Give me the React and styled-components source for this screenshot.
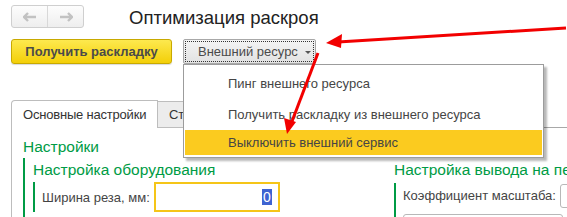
// App.jsx: "Оптимизация раскроя" form with the opened external resource menu

import React from 'react';
import styled, { createGlobalStyle } from 'styled-components';

const Green = '#009b45';
const Text = '#444';

const GlobalStyle = createGlobalStyle`
  html, body { margin: 0; padding: 0; background: #fff; }
  body {
    font-family: "Liberation Sans", Arial, sans-serif;
    font-size: 13px;
    color: ${Text};
    width: 567px;
    height: 217px;
    overflow: hidden;
  }
`;

const Page = styled.div`
  position: relative;
  padding: 5px 0 0 11px;
  height: 212px;
  overflow: hidden;
  white-space: nowrap;
`;

const TopRow = styled.div`
  display: flex;
  align-items: center;
  height: 23px;
`;

const NavGroup = styled.div`
  display: flex;
  width: 73px;
  height: 23px;
  box-sizing: border-box;
  border: 1px solid #cfcfcf;
  border-radius: 3px;
  background: linear-gradient(#fdfdfd, #eeeeee);
`;

const NavButton = styled.div`
  flex: 1;
  display: flex;
  align-items: center;
  justify-content: center;
  border-left: ${(p) => (p.$divider ? '1px solid #d8d8d8' : 'none')};
`;

const Title = styled.div`
  margin-left: 45px;
  margin-top: 2px;
  font-size: 18.5px;
  color: #222;
`;

const ButtonRow = styled.div`
  display: flex;
  gap: 11px;
  margin-top: 11px;
  align-items: flex-start;
`;

const YellowButton = styled.div`
  width: 161px;
  height: 25px;
  box-sizing: border-box;
  border: 1px solid #c8a900;
  border-radius: 3px;
  background: linear-gradient(#fde94f, #f3cf08);
  display: flex;
  align-items: center;
  justify-content: center;
  font-weight: bold;
  color: #4a4a4a;
  box-shadow: 0 1px 1px rgba(0, 0, 0, 0.15);
`;

const MenuHolder = styled.div`
  position: relative;
`;

const SubmenuButton = styled.div`
  width: 133px;
  height: 25px;
  box-sizing: border-box;
  border: 1px solid #a8a8a8;
  border-radius: 2px;
  background: linear-gradient(#f4f4f4, #e2e2e2);
  padding: 1px;
`;

const FocusFrame = styled.div`
  height: 100%;
  box-sizing: border-box;
  border: 1px dotted #333;
  display: flex;
  align-items: center;
  padding-left: 12px;
  gap: 7px;
  color: #4a4a4a;
`;

const Caret = styled.span`
  width: 0;
  height: 0;
  border-left: 3px solid transparent;
  border-right: 3px solid transparent;
  border-top: 3px solid #555;
  margin-top: 2px;
`;

const Menu = styled.div`
  position: absolute;
  top: 25px;
  left: 0;
  z-index: 5;
  width: 361px;
  box-sizing: border-box;
  background: #fff;
  border: 1px solid #9c9c9c;
  box-shadow: 3px 3px 2px rgba(0, 0, 0, 0.28);
  padding: 3px 1px 2px;
`;

const MenuItem = styled.div`
  height: ${(p) => (p.$active ? '25px' : '31px')};
  display: flex;
  align-items: center;
  padding-left: 43px;
  background: ${(p) => (p.$active ? '#fbcb1f' : 'transparent')};
  color: #454545;
`;

const Tabs = styled.div`
  display: flex;
  margin-top: 36px;
  height: 28px;
`;

const Tab = styled.div`
  box-sizing: border-box;
  width: ${(p) => p.$width}px;
  padding-left: 11px;
  display: flex;
  align-items: center;
  border: 1px solid #bdbdbd;
  border-bottom: ${(p) => (p.$active ? 'none' : '1px solid #bdbdbd')};
  border-left: ${(p) => (p.$active ? '1px solid #bdbdbd' : 'none')};
  border-radius: ${(p) => (p.$active ? '4px 0 0 0' : '0')};
  background: ${(p) => (p.$active ? '#fff' : '#ececec')};
  margin-top: ${(p) => (p.$active ? '0' : '1px')};
  color: #333;
  letter-spacing: -0.2px;
`;

const TabFill = styled.div`
  flex: 1;
  border-bottom: 1px solid #a8a8a8;
`;

const Panel = styled.div`
  border-left: 1px solid #bdbdbd;
  padding: 9px 0 0 11px;
  height: 100px;
`;

const Heading = styled.div`
  color: ${Green};
  font-size: 15.5px;
  line-height: 20px;
`;

const Columns = styled.div`
  display: flex;
  margin-top: 1px;
`;

const Group = styled.div`
  border-left: ${(p) => (p.$bar ? `2px solid ${Green}` : 'none')};
  padding-left: ${(p) => (p.$bar ? 8 : 0)}px;
  padding-top: 2px;
  width: ${(p) => p.$width}px;
  flex-shrink: 0;
  box-sizing: border-box;
  height: 60px;
`;

const SubGroup = styled.div`
  margin-top: ${(p) => p.$top}px;
  border-left: 2px solid ${Green};
  padding-left: 7px;
  display: flex;
  flex-direction: column;
  gap: 5px;
`;

const FieldRow = styled.div`
  display: flex;
  align-items: center;
  min-height: 25px;
`;

const Label = styled.div`
  color: ${Text};
  margin-right: 4px;
`;

const Field = styled.div`
  width: ${(p) => p.$width}px;
  height: ${(p) => p.$height}px;
  box-sizing: border-box;
  border: ${(p) => (p.$focused ? '2px solid #f5c518' : '1px solid #b8b8b8')};
  border-radius: ${(p) => (p.$focused ? '0' : '3px')};
  display: flex;
  align-items: center;
  justify-content: flex-end;
  padding-right: 6px;
  flex-shrink: 0;
`;

const Selected = styled.span`
  background: #3e63d1;
  color: #fff;
  font-size: 14px;
  line-height: 16px;
  padding: 0 1px;
`;

const Arrows = styled.svg`
  position: absolute;
  left: 0;
  top: 0;
  z-index: 10;
  pointer-events: none;
`;

const BackIcon = ({ color }) => (
  <svg width="14" height="10" viewBox="0 0 14 10">
    <path d="M1 5h12M5 1L1 5l4 4" stroke={color} strokeWidth="2.4" fill="none" />
  </svg>
);

const ForwardIcon = ({ color }) => (
  <svg width="14" height="10" viewBox="0 0 14 10">
    <path d="M1 5h12M9 1l4 4-4 4" stroke={color} strokeWidth="2.4" fill="none" />
  </svg>
);

const App = () => {
  return (
    <>
      <GlobalStyle />
      <Page>
        <TopRow>
          <NavGroup>
            <NavButton><BackIcon color="#c2c2c2" /></NavButton>
            <NavButton $divider><ForwardIcon color="#c2c2c2" /></NavButton>
          </NavGroup>
          <Title>Оптимизация раскроя</Title>
        </TopRow>

        <ButtonRow>
          <YellowButton>Получить раскладку</YellowButton>
          <MenuHolder>
            <SubmenuButton>
              <FocusFrame>
                Внешний ресурс <Caret />
              </FocusFrame>
            </SubmenuButton>
            <Menu>
              <MenuItem>Пинг внешнего ресурса</MenuItem>
              <MenuItem>Получить раскладку из внешнего ресурса</MenuItem>
              <MenuItem $active>Выключить внешний сервис</MenuItem>
            </Menu>
          </MenuHolder>
        </ButtonRow>

        <Tabs>
          <Tab $active $width={147}>Основные настройки</Tab>
          <Tab $width={80}>Стиль</Tab>
          <TabFill />
        </Tabs>
        <Panel>
          <Heading>Настройки</Heading>
          <Columns>
            <Group $bar $width={371}>
              <Heading>Настройка оборудования</Heading>
              <SubGroup $top={2}>
                <FieldRow>
                  <Label>Ширина реза, мм:</Label>
                  <Field $focused $width={126} $height={30}>
                    <Selected>0</Selected>
                  </Field>
                </FieldRow>
              </SubGroup>
            </Group>
            <Group $width={250}>
              <Heading>Настройка вывода на печать</Heading>
              <SubGroup $top={3}>
                <FieldRow>
                  <Label>Коэффициент масштаба:</Label>
                  <Field $width={60} $height={24} />
                </FieldRow>
                <FieldRow>
                  <Field $width={160} $height={24} />
                </FieldRow>
              </SubGroup>
            </Group>
          </Columns>
        </Panel>

        <Arrows width="567" height="217" viewBox="0 0 567 217">
          <path d="M566 28 L338 42" stroke="#f20000" strokeWidth="3" fill="none" />
          <path d="M326 43 L342 34 L341 48 Z" fill="#f20000" />
          <path d="M318 53 L291 124" stroke="#f20000" strokeWidth="3" fill="none" />
          <path d="M287 134 L284 118 L296 122 Z" fill="#f20000" />
        </Arrows>
      </Page>
    </>
  );
};

export default App;
